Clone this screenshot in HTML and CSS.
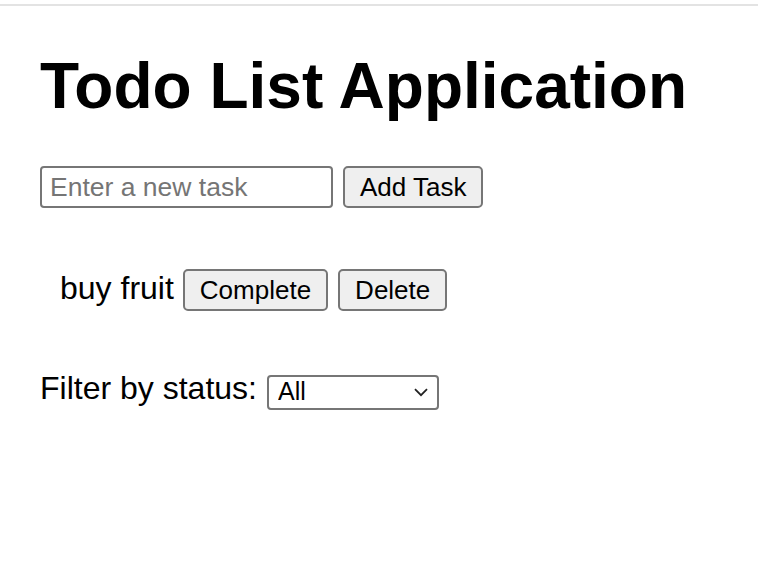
FILE: index.html
```html
<!DOCTYPE html>
<html>
<head>
<meta charset="utf-8">
<link rel="stylesheet" href="styles.css">
</head>
<body>
<div class="topline"></div>
<main class="app">
  <h1 class="title">Todo List Application</h1>
  <div class="add-row">
    <input class="task-input" type="text" placeholder="Enter a new task">
    <button class="btn">Add Task</button>
  </div>
  <ul class="todo-list">
    <li class="todo-item">
      <span class="todo-text">buy fruit</span>
      <button class="btn">Complete</button>
      <button class="btn">Delete</button>
    </li>
  </ul>
  <div class="filter-row">
    <label class="filter-label" for="filter">Filter by status:</label>
    <div class="select-wrap">
      <select id="filter" class="filter-select">
        <option>All</option>
        <option>Completed</option>
        <option>Incomplete</option>
      </select>
      <svg class="chevron" width="14" height="9" viewBox="0 0 14 9"><path d="M1 1.2 L7 7.2 L13 1.2" fill="none" stroke="#222" stroke-width="1.8"/></svg>
    </div>
  </div>
</main>
</body>
</html>
```

FILE: styles.css
```css
html, body {
  margin: 0;
  padding: 0;
  background: #ffffff;
}
body {
  font-family: "Liberation Sans", Arial, Helvetica, sans-serif;
  color: #000;
}
.topline {
  margin-top: 4px;
  height: 2px;
  background: #e3e3e3;
}
.app {
  padding-left: 40px;
  display: flex;
  flex-direction: column;
  align-items: flex-start;
}
.title {
  margin: 43px 0 0 0;
  font-size: 64px;
  line-height: 74px;
  font-weight: bold;
}
.add-row {
  margin-top: 43px;
  display: flex;
  align-items: center;
  gap: 10px;
}
.task-input {
  box-sizing: border-box;
  width: 293px;
  height: 42px;
  margin: 0;
  padding: 0 8px;
  border: 2px solid #767676;
  border-radius: 4px;
  font-family: inherit;
  font-size: 26.5px;
  color: #000;
  background: #fff;
  outline: none;
}
.task-input::placeholder {
  color: #757575;
}
.btn {
  box-sizing: border-box;
  height: 42px;
  margin: 0;
  padding: 0 15px;
  border: 2px solid #767676;
  border-radius: 5px;
  background: #efefef;
  font-family: inherit;
  font-size: 26px;
  color: #000;
}
.todo-list {
  list-style: none;
  margin: 61px 0 0 0;
  padding: 0 0 0 20px;
}
.todo-item {
  display: flex;
  align-items: baseline;
}
.todo-text {
  font-size: 32px;
  margin-right: 9px;
}
.todo-item .btn + .btn {
  margin-left: 10px;
}
.filter-row {
  margin-top: 59px;
  display: flex;
  align-items: flex-start;
  gap: 10px;
}
.filter-label {
  font-size: 32px;
  line-height: 37px;
}
.select-wrap {
  position: relative;
  display: flex;
  margin-top: 5px;
}
.filter-select {
  appearance: none;
  -webkit-appearance: none;
  box-sizing: border-box;
  width: 172px;
  height: 35px;
  margin: 0;
  padding: 0 0 3px 9px;
  border: 2px solid #767676;
  border-radius: 4px;
  background: #fff;
  font-family: inherit;
  font-size: 25px;
  color: #000;
}
.chevron {
  position: absolute;
  left: 147px;
  top: 13px;
  pointer-events: none;
}
```
